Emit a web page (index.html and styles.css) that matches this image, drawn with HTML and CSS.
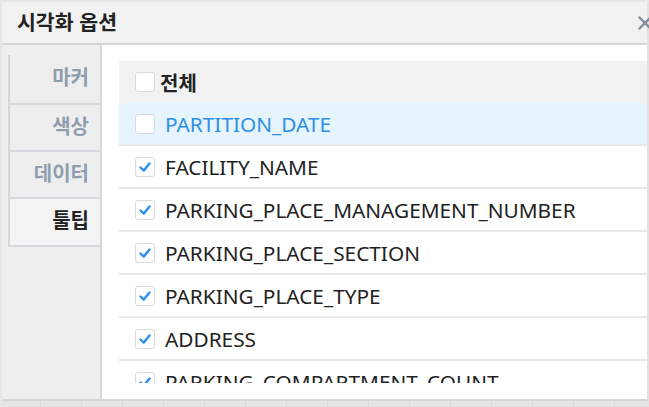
FILE: index.html
```html
<!DOCTYPE html>
<html lang="ko">
<head>
<meta charset="utf-8">
<link rel="stylesheet" href="styles.css">
</head>
<body>
<div class="dialog">
  <div class="header">
    <div class="title">시각화 옵션</div>
    <svg class="close" width="14" height="14" viewBox="0 0 14 14"><path d="M1.5 1.5 L12.5 12.5 M12.5 1.5 L1.5 12.5" stroke="#7f8c99" stroke-width="2.4" stroke-linecap="round"/></svg>
  </div>
  <div class="body">
    <div class="sidebar">
      <div class="tabs">
        <div class="tab first">마커</div>
        <div class="tab">색상</div>
        <div class="tab">데이터</div>
        <div class="tab active">툴팁</div>
      </div>
    </div>
    <div class="main">
      <div class="list">
        <div class="row head"><span class="cb"></span><span class="label">전체</span></div>
        <div class="row sel"><span class="cb"></span><span class="label">PARTITION_DATE</span></div>
        <div class="row"><span class="cb on"><svg width="18" height="18" viewBox="0 0 18 18"><path d="M4.5 9.5 L7.8 12.6 L13.5 5.5" fill="none" stroke="#2b90f5" stroke-width="2.4" stroke-linecap="round" stroke-linejoin="round"/></svg></span><span class="label">FACILITY_NAME</span></div>
        <div class="row"><span class="cb on"><svg width="18" height="18" viewBox="0 0 18 18"><path d="M4.5 9.5 L7.8 12.6 L13.5 5.5" fill="none" stroke="#2b90f5" stroke-width="2.4" stroke-linecap="round" stroke-linejoin="round"/></svg></span><span class="label">PARKING_PLACE_MANAGEMENT_NUMBER</span></div>
        <div class="row"><span class="cb on"><svg width="18" height="18" viewBox="0 0 18 18"><path d="M4.5 9.5 L7.8 12.6 L13.5 5.5" fill="none" stroke="#2b90f5" stroke-width="2.4" stroke-linecap="round" stroke-linejoin="round"/></svg></span><span class="label">PARKING_PLACE_SECTION</span></div>
        <div class="row"><span class="cb on"><svg width="18" height="18" viewBox="0 0 18 18"><path d="M4.5 9.5 L7.8 12.6 L13.5 5.5" fill="none" stroke="#2b90f5" stroke-width="2.4" stroke-linecap="round" stroke-linejoin="round"/></svg></span><span class="label">PARKING_PLACE_TYPE</span></div>
        <div class="row"><span class="cb on"><svg width="18" height="18" viewBox="0 0 18 18"><path d="M4.5 9.5 L7.8 12.6 L13.5 5.5" fill="none" stroke="#2b90f5" stroke-width="2.4" stroke-linecap="round" stroke-linejoin="round"/></svg></span><span class="label">ADDRESS</span></div>
        <div class="row"><span class="cb on"><svg width="18" height="18" viewBox="0 0 18 18"><path d="M4.5 9.5 L7.8 12.6 L13.5 5.5" fill="none" stroke="#2b90f5" stroke-width="2.4" stroke-linecap="round" stroke-linejoin="round"/></svg></span><span class="label">PARKING_COMPARTMENT_COUNT</span></div>
      </div>
    </div>
  </div>
</div>
<div class="under"></div>
</body>
</html>
```

FILE: styles.css
```css
html, body {
  margin: 0;
  padding: 0;
}
body {
  width: 649px;
  height: 407px;
  overflow: hidden;
  background: #e6e6e6;
  font-family: "Noto Sans CJK KR", "Noto Sans", sans-serif;
  color: #222;
}
.dialog {
  margin: 2px 2px 0 2px;
  width: 645px;
  background: #fff;
  border-right: 2px solid #e2e2e2;
}
.header {
  height: 41px;
  background: #f2f2f2;
  border-bottom: 2px solid #d3d6d9;
  display: flex;
  align-items: center;
  justify-content: space-between;
  overflow: visible;
}
.title {
  padding-left: 15px;
  font-size: 20.5px;
  font-weight: 700;
  color: #222;
  margin-top: -4px;
}
.close {
  margin-right: -5px;
  margin-top: 1px;
  overflow: visible;
}
.body {
  display: flex;
  height: 354px;
  border-bottom: 2px solid #d5d8db;
}
.sidebar {
  width: 100px;
  background: #efefef;
  border-right: 2px solid #d6d9dc;
  padding: 10px 0 0 6px;
  box-sizing: border-box;
  flex: none;
}
.tabs {
  border-left: 2px solid #d3d7db;
}
.tab {
  height: 45px;
  border-bottom: 2px solid #d6dade;
  text-align: right;
  padding-right: 11px;
  font-size: 20px;
  font-weight: 700;
  color: #8e9eae;
  line-height: 42px;
  background: #eeeeee;
}
.tab.first {
  height: 48px;
  line-height: 44px;
}
.tab.active {
  color: #222;
  background: #f3f3f3;
  height: 46px;
}
.main {
  flex: 1;
  padding: 16px 0 0 17px;
  min-width: 0;
}
.list {
  height: 322px;
  overflow: hidden;
}
.row {
  height: 41px;
  border-bottom: 2px solid #e8e8e8;
  display: flex;
  align-items: center;
  padding-left: 16px;
  white-space: nowrap;
}
.row.head {
  height: 42px;
  border-bottom: none;
  background: #f2f2f2;
}
.row.sel {
  background: #e6f4fd;
}
.row.sel .label {
  color: #2d8fe6;
}
.cb {
  width: 18px;
  height: 18px;
  border: 1px solid #d8dadd;
  border-radius: 3px;
  background: #fff;
  box-sizing: content-box;
  flex: none;
  display: flex;
}
.label {
  margin-left: 10px;
  font-family: "Noto Sans", "Noto Sans CJK KR", sans-serif;
  font-size: 20.8px;
  color: #222;
}
.row.head .label {
  margin-left: 5px;
  font-family: "Noto Sans CJK KR", "Noto Sans", sans-serif;
  font-size: 20px;
  font-weight: 700;
}
.under {
  height: 8px;
  background: repeating-linear-gradient(90deg, #e4e4e4 0 40px, #d9d9d9 40px 41px);
}
```
